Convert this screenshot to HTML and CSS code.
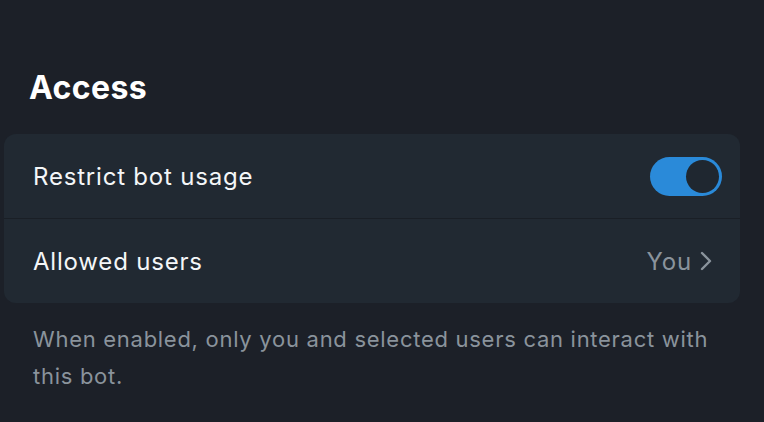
FILE: index.html
```html
<!DOCTYPE html>
<html>
<head>
<meta charset="utf-8">
<link rel="stylesheet" href="styles.css">
</head>
<body>
<main class="page">
  <h2 class="section-title">Access</h2>
  <div class="card">
    <div class="row">
      <span class="label">Restrict bot usage</span>
      <span class="toggle on"><span class="knob"></span></span>
    </div>
    <div class="row">
      <span class="label">Allowed users</span>
      <span class="value">You
        <svg class="chev" width="12" height="20" viewBox="0 0 12 20"><path d="M2 2 L10 10 L2 18" fill="none" stroke="currentColor" stroke-width="2.4" stroke-linecap="round" stroke-linejoin="round"/></svg>
      </span>
    </div>
  </div>
  <p class="note">When enabled, only you and selected users can interact with this bot.</p>
</main>
</body>
</html>
```
FILE: styles.css
```css
html, body {
  margin: 0;
  padding: 0;
  background: #1c2028;
  height: 100%;
}
body {
  font-family: Inter, "Open Sans", "Liberation Sans", sans-serif;
  color: #ffffff;
}
.page {
  padding: 66px 24px 0 4px;
}
.section-title {
  margin: 0 0 24px 25px;
  font-size: 32px;
  font-weight: 700;
  line-height: 44px;
  letter-spacing: 0.4px;
}
.card {
  background: #212932;
  border-radius: 12px;
  overflow: hidden;
}
.row {
  height: 84px;
  display: flex;
  align-items: center;
  justify-content: space-between;
  padding: 0 18px 0 29px;
}
.row + .row {
  border-top: 1px solid #1a1f26;
}
.label {
  font-size: 24px;
  letter-spacing: 0.8px;
  color: #f4f6f8;
}
.value {
  display: flex;
  align-items: center;
  gap: 8px;
  font-size: 24px;
  letter-spacing: 0.8px;
  color: #8a939c;
  padding-right: 10px;
}
.chev { color: #8a939c; }
.toggle {
  width: 72px;
  height: 39px;
  border-radius: 20px;
  background: #2a8ad9;
  display: flex;
  align-items: center;
  justify-content: flex-end;
  padding-right: 3px;
  box-sizing: border-box;
}
.knob {
  width: 33px;
  height: 33px;
  border-radius: 50%;
  background: #1f2730;
}
.note {
  margin: 18px 0 0 29px;
  font-size: 22px;
  line-height: 37px;
  letter-spacing: 0.72px;
  color: #8a939c;
}
```
